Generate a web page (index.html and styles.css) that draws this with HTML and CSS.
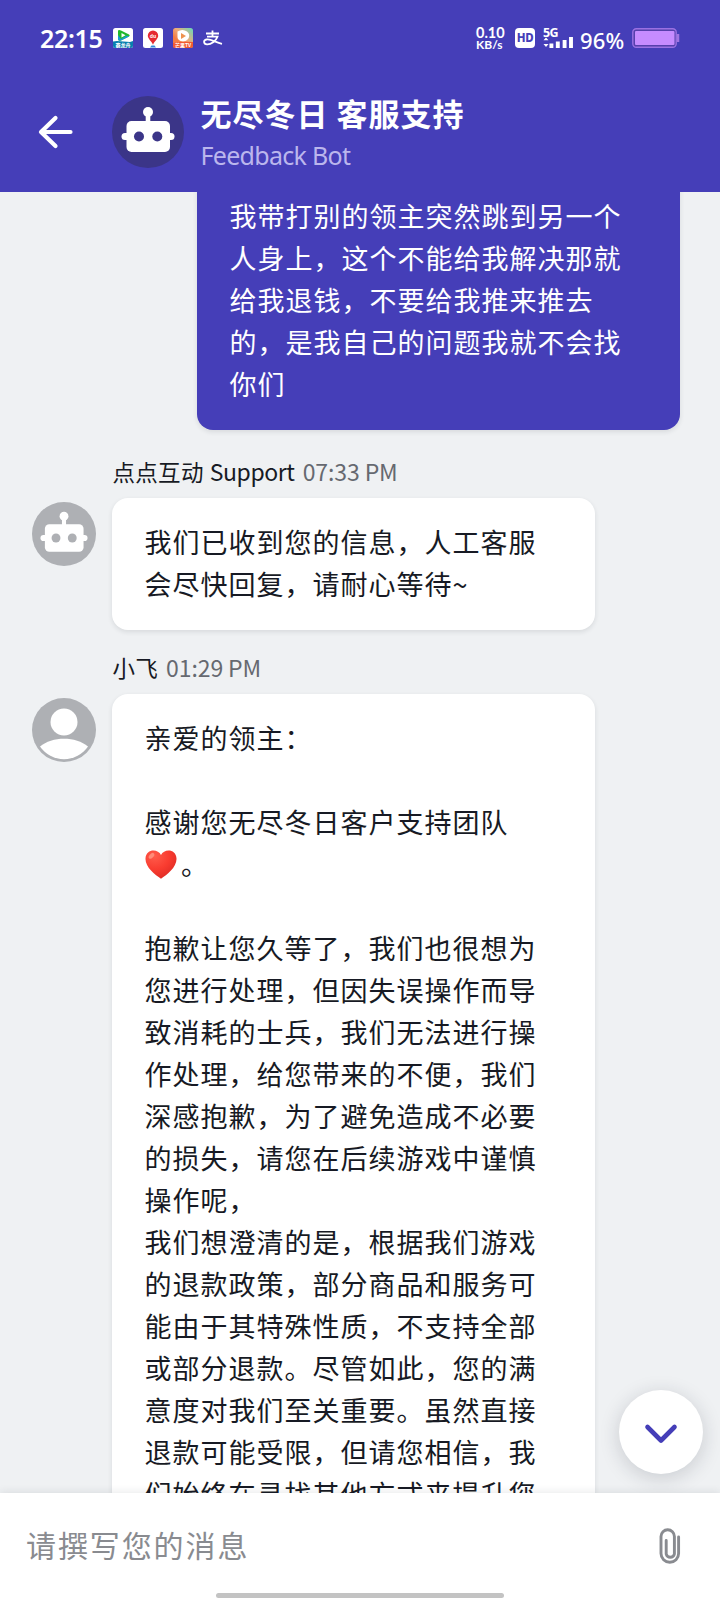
FILE: index.html
```html
<!DOCTYPE html>
<html lang="zh-CN">
<head>
<meta charset="utf-8">
<title>无尽冬日 客服支持</title>
<link rel="stylesheet" href="styles.css">
</head>
<body>
<svg width="0" height="0" class="defs">
  <symbol id="bot" viewBox="0 0 72 72">
    <circle cx="36" cy="16" r="5" fill="#fff"/>
    <path d="M36 18v10" stroke="#fff" stroke-width="4.6"/>
    <rect x="9.500" y="37" width="53" height="7" rx="3.500" fill="#fff"/>
    <rect x="14.500" y="25" width="43.500" height="31" rx="5" fill="#fff"/>
    <circle class="eye" cx="27" cy="40.500" r="5"/>
    <circle class="eye" cx="45.300" cy="40.500" r="5"/>
  </symbol>
</svg>
<div class="screen">
  <header class="top">
    <div class="status">
      <span class="clock">22:15</span>
      <svg class="app" viewBox="0 0 20 20"><rect width="20" height="20" rx="2.500" fill="#fff"/><path d="M5 2.500q1-1 3 0l8 4q1.500 1 0 2L8 12.500q-3 1-3-1.500z" fill="#20b82c"/><path d="M5 7v4q0 2.500 3 1.500l8-4q-1-1-3-.5L8 11z" fill="#169ad6"/><path d="M8.500 5v4.500l4-2.200z" fill="#fff"/><path d="M0 13.500l4-.5 13 1 3-1v4.500q0 2.500-2.500 2.500h-15Q0 20 0 17.500z" fill="#087fae"/><text x="10" y="19" class="tag">赛龙舟</text></svg>
      <svg class="app" viewBox="0 0 20 20"><rect width="20" height="20" rx="2.500" fill="#fff"/><path d="M10 2.500a5.200 5.200 0 0 1 5.200 5.200c0 3-3.500 5-5.200 9-1.700-4-5.200-6-5.200-9A5.200 5.200 0 0 1 10 2.500z" fill="#e52a31"/><text x="10" y="9.500" class="tag">du</text><path d="M7 19.500l1.500-2h3l1.500 2z" fill="#3589dd"/></svg>
      <svg class="app" viewBox="0 0 20 20"><defs><linearGradient id="g" x1="0" y1="1" x2="1" y2="0"><stop offset=".3" stop-color="#f47c43"/><stop offset=".55" stop-color="#efaa79"/><stop offset="1" stop-color="#63d9bb"/></linearGradient></defs><rect width="20" height="20" rx="2.500" fill="url(#g)"/><path d="M4.500 3.500q5-3 9.500 0c4 3 2 8-1.500 9.500-4 1.500-8-1-8-4z" fill="#fff"/><path d="M8 5v6l5-3z" fill="#ee9250"/><path d="M0 15q10-2 20-1v3.500q0 2.500-2.500 2.500h-15Q0 20 0 17.500z" fill="#f15a31"/><text x="10" y="19" class="tag">芒果TV</text></svg>
      <svg class="pay" viewBox="0 0 20 16"><path d="M3 3.500h13M9.500.5v6M4 6.700h10.500C13 11 8 14.500 4 14.300c-3.500-.2-4-4-.5-4.800 4.500-.8 9 3 15.500 4.300" fill="none" stroke="#fff" stroke-width="1.800"/></svg>
      <span class="spacer"></span>
      <span class="rate"><span class="num">0.10</span><span class="unit">KB/s</span></span>
      <span class="hd">HD</span>
      <span class="cell"><span class="gen">5G</span>
        <svg viewBox="0 0 30 12"><path d="M.5 4.300L3 1.500l2.500 2.800zM.5 8L3 11l2.500-3z" fill="#fff"/><path d="M8.400 12V7.500M14.800 12V5.500M21.600 12V4M28 12V1" stroke="#fff" stroke-width="3.900"/></svg></span>
      <span class="pct">96%</span>
      <svg class="battery" viewBox="0 0 48 20"><rect x=".8" y=".8" width="43.400" height="18.400" rx="3.500" fill="#5740ac" stroke="#9a71e2" stroke-width="1.400"/><rect x="3" y="3" width="39.500" height="14" rx="1" fill="#c68cff"/><path d="M46 6v8" stroke="#a175e2" stroke-width="2.500"/></svg>
    </div>
    <div class="bar">
      <svg class="back" viewBox="0 0 36 36"><path d="M17.500 4L3 18l14.500 14M4 18h28.500" fill="none" stroke="#fff" stroke-width="4.200" stroke-linecap="round" stroke-linejoin="round"/></svg>
      <svg class="face"><use href="#bot"/></svg>
      <div class="titles"><h1>无尽冬日 客服支持</h1><p>Feedback Bot</p></div>
    </div>
  </header>

  <main class="thread">
    <div class="bubble mine">我带打别的领主突然跳到另一个<br>人身上，这个不能给我解决那就<br>给我退钱，不要给我推来推去<br>的，是我自己的问题我就不会找<br>你们</div>

    <section class="message">
      <div class="meta"><span class="cn">点点互动</span><span class="latin">Support</span><time>07:33 PM</time></div>
      <svg class="avatar"><use href="#bot"/></svg>
      <div class="bubble">我们已收到您的信息，人工客服<br>会尽快回复，请耐心等待~</div>
    </section>

    <section class="message agent">
      <div class="meta"><span class="cn">小飞</span><time>01:29 PM</time></div>
      <svg class="avatar" viewBox="0 0 64 64"><circle cx="32" cy="24" r="13.500" fill="#fff"/><path d="M8 48.500C20 38 44 38 56 48.500A29 29 0 0 1 8 48.500z" fill="#fff"/></svg>
      <div class="bubble">亲爱的领主：<br><br>感谢您无尽冬日客户支持团队<br><svg class="heart" viewBox="0 0 32 29"><defs><radialGradient id="h" cx=".3" cy=".2" r=".85"><stop offset="0" stop-color="#ff5b4b"/><stop offset=".55" stop-color="#f93c30"/><stop offset="1" stop-color="#de2b25"/></radialGradient></defs><path d="M16 5C13-1.500 1-1.500.5 8.500 0 17 10 25 16 28.700 22 25 32 17 31.500 8.500 31-1.500 19-1.500 16 5z" fill="url(#h)"/><ellipse cx="6.500" cy="5.800" rx="3.400" ry="2" transform="rotate(-45 6.500 5.800)" fill="#ff8b78"/></svg>。<br><br>抱歉让您久等了，我们也很想为<br>您进行处理，但因失误操作而导<br>致消耗的士兵，我们无法进行操<br>作处理，给您带来的不便，我们<br>深感抱歉，为了避免造成不必要<br>的损失，请您在后续游戏中谨慎<br>操作呢，<br>我们想澄清的是，根据我们游戏<br>的退款政策，部分商品和服务可<br>能由于其特殊性质，不支持全部<br>或部分退款。尽管如此，您的满<br>意度对我们至关重要。虽然直接<br>退款可能受限，但请您相信，我<br>们始终在寻找其他方式来提升您</div>
    </section>

    <button class="jump" aria-label="向下"><svg viewBox="0 0 36 24"><path d="M4.500 5L18 18.500 31.500 5" fill="none" stroke="#453eb8" stroke-width="4.600" stroke-linecap="round" stroke-linejoin="round"/></svg></button>
  </main>

  <footer class="composer">
    <div class="entry">
      <span class="hint">请撰写您的消息</span>
      <svg class="clip" viewBox="0 0 22 37"><path d="M19.600 9v16.500a8.800 8.800 0 0 1-17.600 0V8.500a6.700 6.700 0 0 1 13.400 0V26a4.200 4.200 0 0 1-8.200 0V12.500" fill="none" stroke="#898b90" stroke-width="2.900" stroke-linecap="round"/></svg>
    </div>
    <div class="home"></div>
  </footer>
</div>
</body>
</html>
```
FILE: styles.css
```css
* { box-sizing: border-box; }
body { margin: 0; font-family: "Noto Sans CJK SC", sans-serif; }
svg { display: block; flex: none; }
.defs { position: absolute; }
.screen { width: 720px; height: 1600px; display: flex; flex-direction: column; overflow: hidden; background: #eff1f3; }

.top { flex: none; height: 192px; background: #453eb8; color: #fff; position: relative; }
.status { display: flex; align-items: center; height: 76px; padding: 0 40px; }
.clock { font: 600 25px/30px "Noto Sans", sans-serif; width: 63px; letter-spacing: -.3px; margin-right: 10px; }
.app { width: 20px; height: 20px; margin-right: 10px; }
.tag { font: 700 5px "Noto Sans CJK SC", sans-serif; fill: #fff; text-anchor: middle; }
.pay { width: 20px; height: 16px; }
.spacer { flex: 1; }
.rate { display: flex; flex-direction: column; width: 30px; margin-right: 9px; font-family: Lato, sans-serif; font-weight: 700; white-space: nowrap; }
.num { font-size: 14.500px; line-height: 13px; }
.unit { font-size: 12px; line-height: 12px; }
.hd { width: 20px; height: 20px; border-radius: 4px; background: #fff; color: #453eb8; font: 800 11.500px/20px "Noto Sans", sans-serif; letter-spacing: -.3px; text-align: center; margin-right: 8px; }
.cell { width: 30px; height: 20px; margin-right: 7px; }
.gen { display: block; font: 700 12.500px/9px "Noto Sans", sans-serif; letter-spacing: -.6px; height: 8px; }
.cell svg { width: 30px; height: 12px; }
.pct { font: 500 22px/26px "Noto Sans", sans-serif; letter-spacing: .2px; width: 45px; margin-right: 7px; padding-top: 3px; }
.battery { width: 48px; height: 20px; }

.bar { display: flex; align-items: center; height: 72px; margin-top: 20px; padding-left: 38px; }
.back { width: 36px; height: 36px; }
.face { width: 72px; height: 72px; border-radius: 50%; background: #3b3588; margin: 0 16.500px 0 38px; fill: #3b3588; }
.titles h1 { margin: 0; font-size: 31px; line-height: 40px; font-weight: 700; letter-spacing: 1px; white-space: nowrap; }
.titles p { margin: 5px 0 0; font: 400 25px/34px "Noto Sans", sans-serif; color: #bbb6ed; letter-spacing: -.7px; }

.thread { flex: 1; min-height: 0; overflow: hidden; position: relative; }
.bubble { width: 483px; padding: 23px 0 25px 32.500px; border-radius: 16px; background: #fff; color: #171a24; box-shadow: 0 2px 5px rgba(30, 35, 50, .11); font-size: 27px; line-height: 42px; letter-spacing: 1px; white-space: nowrap; }
.mine { margin: -20px 40px 0 auto; background: #453eb8; color: #fff; }
.message { display: grid; grid-template-columns: 64px 483px; column-gap: 16px; padding: 25px 0 0 32px; align-items: start; }
.meta { grid-column: 2; display: flex; height: 43px; line-height: 32px; font-size: 22.500px; color: #171a24; white-space: nowrap; }
.cn { letter-spacing: .3px; padding-left: .5px; }
.latin { margin-left: 6px; font-size: 23px; letter-spacing: -.4px; }
.meta time { margin-left: 8px; color: #666970; font-size: 23px; letter-spacing: -.1px; }
.avatar { width: 64px; height: 64px; margin-top: 4px; border-radius: 50%; background: #aeb0b4; fill: #aeb0b4; }
.agent { padding-top: 21px; }
.heart { display: inline-block; width: 32px; height: 29px; vertical-align: -3.500px; margin: 0 4px 0 .5px; }
.jump { position: absolute; right: 17.500px; bottom: 18.500px; width: 84px; height: 84px; border: 0; border-radius: 50%; background: #fff; display: grid; place-items: center; padding: 4px 0 0; box-shadow: 0 4px 20px rgba(30, 35, 50, .18); }
.jump svg { width: 36px; height: 24px; }

.composer { flex: none; height: 107.500px; background: #fff; position: relative; box-shadow: 0 -1px 8px rgba(30, 35, 50, .1); display: flex; flex-direction: column; align-items: center; }
.entry { width: 100%; height: 100px; padding: 5px 39px 0 26px; display: flex; align-items: center; justify-content: space-between; }
.hint { font-size: 30px; letter-spacing: 1.900px; color: #898b90; margin-top: -2px; }
.clip { width: 22px; height: 37px; margin-top: 2px; }
.home { width: 288px; height: 5px; border-radius: 3px; background: #c3c3c3; }
```
